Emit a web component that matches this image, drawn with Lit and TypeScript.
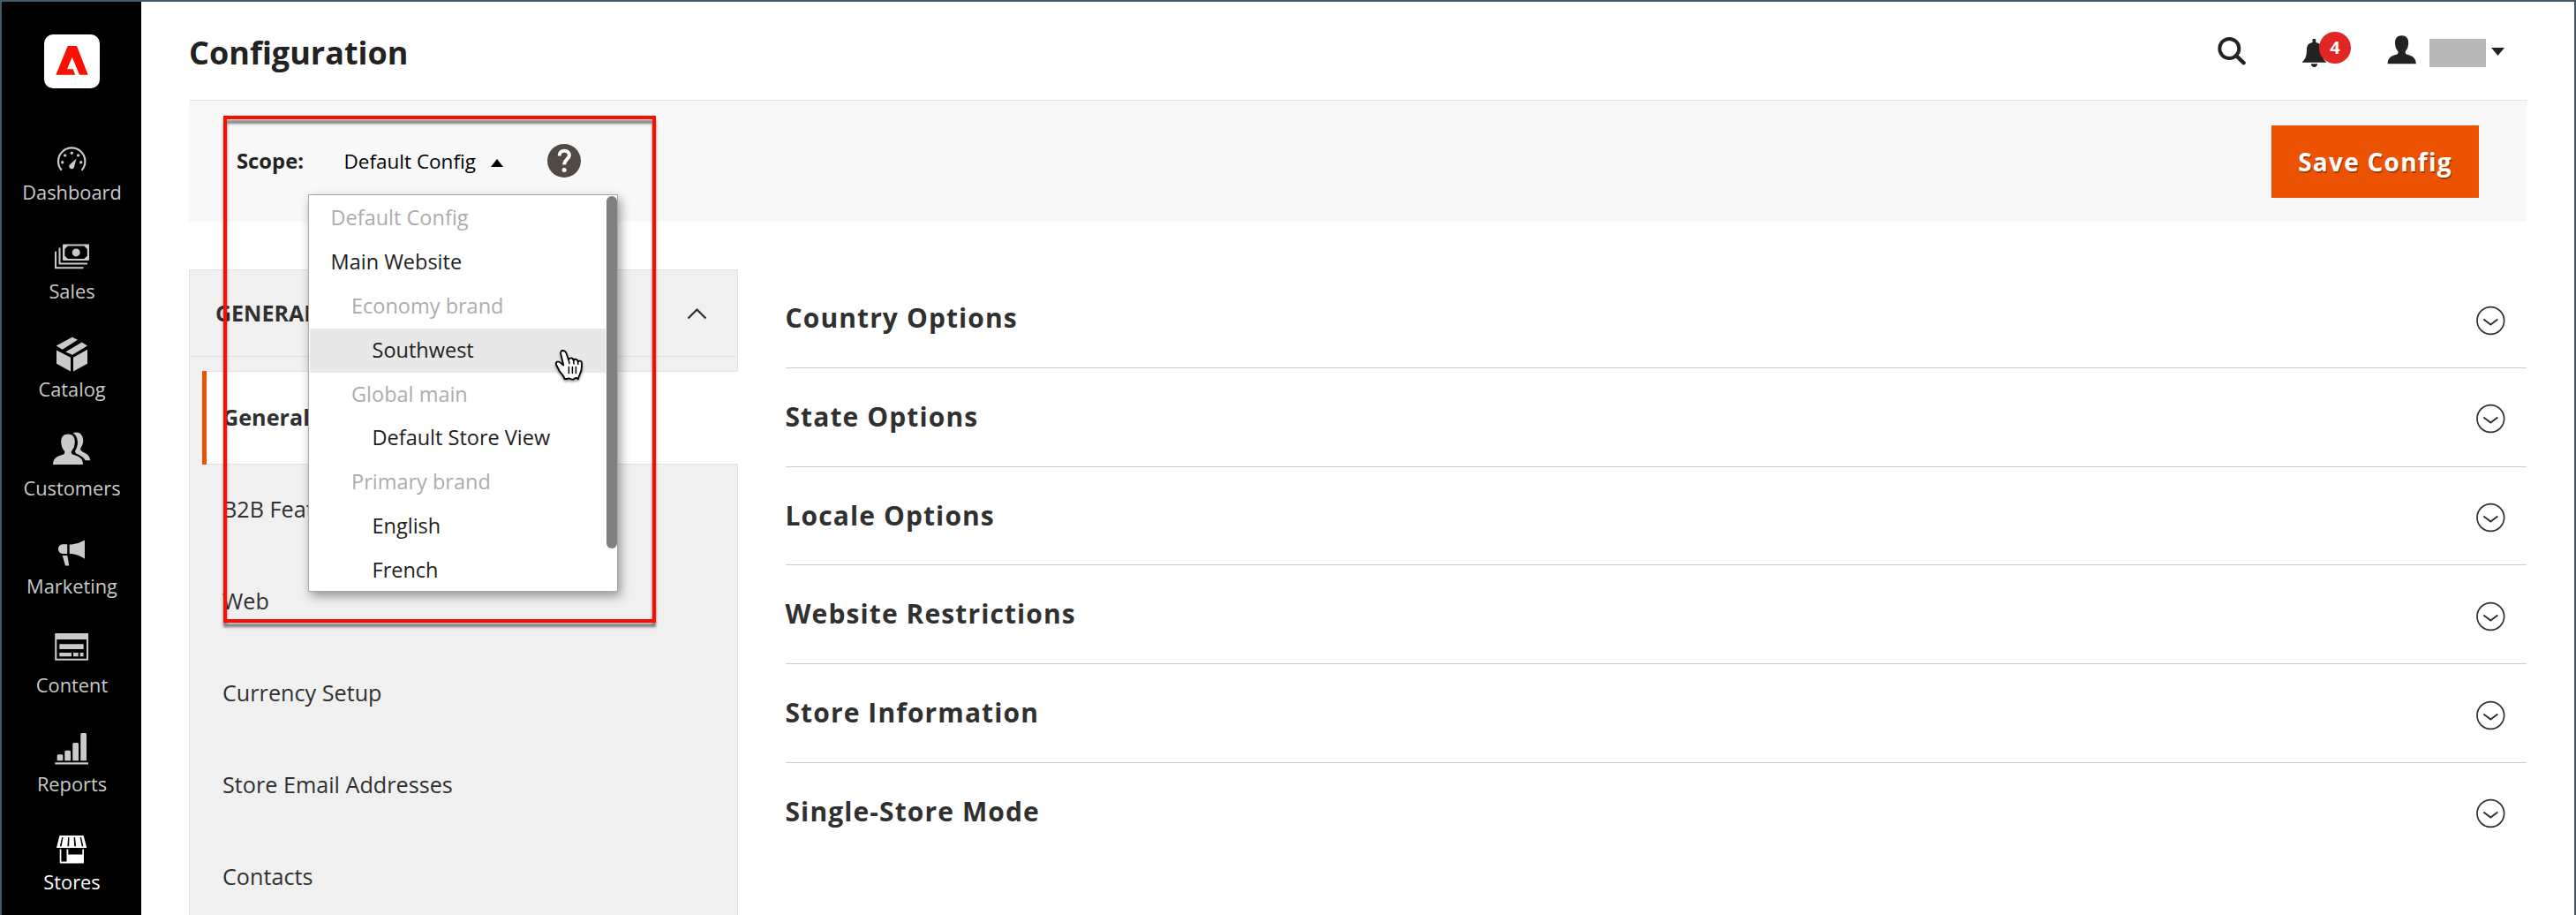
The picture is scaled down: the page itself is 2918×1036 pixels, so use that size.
import { LitElement, html, css, svg } from "lit";
import { customElement } from "lit/decorators.js";
import { classMap } from "lit/directives/class-map.js";

const navItems = [
  {
    label: "Dashboard",
    icon: svg`<path d="M12.9 37.8A15.2 15.2 0 1 1 35.5 37.8" fill="none" stroke="currentColor" stroke-width="2.2"/>
      <circle cx="13.7" cy="28.7" r="1.7"/><circle cx="16.7" cy="20.9" r="1.7"/><circle cx="24.3" cy="18.3" r="1.7"/>
      <circle cx="31.6" cy="20.9" r="1.7"/><circle cx="34.7" cy="28.7" r="1.7"/>
      <path d="M29.6 24.4L27.2 33.6A3 3 0 1 1 21.9 31.4Z"/>`,
  },
  {
    label: "Sales",
    icon: svg`<path fill-rule="evenodd" d="M15 9.4H43a1 1 0 0 1 1 1V27.1a1 1 0 0 1-1 1H15a1 1 0 0 1-1-1V10.4a1 1 0 0 1 1-1ZM20 11.6L16.4 15V22.8L20 26H38.2L41.8 22.8V15L38.2 11.6Z"/>
      <circle cx="29.2" cy="18.9" r="4.5"/>
      <path d="M10.5 13.5V31.4H42M6 17.7V36.2H37.5" fill="none" stroke="currentColor" stroke-width="2"/>`,
  },
  {
    label: "Catalog",
    icon: svg`<path d="M6.7 13.5L24.7 3.8 31 6.8 13.7 17.8ZM17.3 20.5L35.7 9.5 42 13.5 25 23.8ZM7 18.5L23 26.8V42.5L7 33.8ZM26 26.8L42 17.8V33.8L26 42.5Z"/>`,
  },
  {
    label: "Customers",
    icon: svg`<path d="M20 1.4C25 1.4 28 5 27.8 10.5C27.6 15.5 26 18.6 24 20.6C23.4 22.4 24 24 25.4 24.6C31 26.6 37 28 37 35.9H3C3 28 9 26.6 14.6 24.6C16 24 16.6 22.4 16 20.6C14 18.6 12.4 15.5 12.2 10.5C12 5 15 1.4 20 1.4Z"/>
      <path d="M25.7 .5C31-2.2 37.5 1.5 37.2 9C37 14 35 16 34.2 17.8C33.6 20 36 21.3 38.5 22.4C42.5 24.2 44.8 27 45.3 31.2H39.6C38 28 34.5 26 31.5 24.6C28.6 23.3 27.6 22 28.3 20C30.3 17 31.3 13 30.8 9.5C30.5 5 29 2.5 25.7 .5Z"/>`,
  },
  {
    label: "Marketing",
    icon: svg`<path d="M14 15.3H19.2V25.9H14C7.3 25.9 7.3 15.3 14 15.3ZM21.7 15.5C29 15.5 34 13 39 10.5V31.7C34 28.7 29 26 21.7 26ZM13.7 27.9H19.3L21.3 39.6H17Z"/>`,
  },
  {
    label: "Content",
    icon: svg`<path fill-rule="evenodd" d="M6 4H42.3a.8.8 0 0 1 .8.8V34a.8.8 0 0 1-.8.8H6a.8.8 0 0 1-.8-.8V4.8A.8.8 0 0 1 6 4ZM7.300 11V32.800H41V11Z"/>
      <path d="M10.300 16.300H37.700V22.100H10.300ZM10.300 26H24V30.200H10.300ZM26 26H31.700V30.200H26ZM33.700 26H37.500V30.200H33.700Z"/>`,
  },
  {
    label: "Reports",
    icon: svg`<path d="M5.300 38.300H43V40.500H5.300ZM8.700 29.300H13.300L14.300 30.300V36.300H7.700V30.300ZM17.300 24.700H22L23 25.700V36.300H16.300V25.700ZM26.300 16H31L32 17V36.300H25.300V17ZM35.300 5H40L41 6V36.300H34.300V6Z"/>`,
  },
  {
    label: "Stores",
    active: true,
    icon: svg`<path fill-rule="evenodd" d="M10.500 10.100H37.600L41.300 23.900H7ZM13.200 12.100L10.800 22.200H12.600L14.600 12.100ZM20.100 12.100L19.400 22.200H21.200L21.500 12.100ZM26.600 12.100L27.200 22.200H29L28.100 12.100ZM33.600 12.100L35.700 22.200H37.400L35.100 12.100Z"/>
      <path fill-rule="evenodd" d="M10.700 25.500H38V40.500a1 1 0 0 1-1 1H11.700a1 1 0 0 1-1-1ZM12.400 25.500V39.600H18.500V25.500ZM20.300 25.500V31.600H36.300V25.500Z"/>`,
  },
];

const scopes = [
  { name: "Default Config", level: 0, disabled: true },
  { name: "Main Website", level: 0 },
  { name: "Economy brand", level: 1, disabled: true },
  { name: "Southwest", level: 2, hover: true },
  { name: "Global main", level: 1, disabled: true },
  { name: "Default Store View", level: 2 },
  { name: "Primary brand", level: 1, disabled: true },
  { name: "English", level: 2 },
  { name: "French", level: 2 },
];

const tabs = ["B2B Features", "Web", "Currency Setup", "Store Email Addresses", "Contacts"];

const sections = [
  "Country Options",
  "State Options",
  "Locale Options",
  "Website Restrictions",
  "Store Information",
  "Single-Store Mode",
];

@customElement("side-nav")
export class SideNav extends LitElement {
  static styles = css`
    :host { display: flex; flex-direction: column; align-items: center; background: #000; color: #cacaca; padding-top: 37px; }
    .logo { width: 63px; height: 61px; border-radius: 10px; background: #fff; margin-bottom: 55px; flex: none; }
    .logo svg { display: block; }
    .item { width: 100%; height: 111.6px; flex: none; display: flex; flex-direction: column; align-items: center; }
    .item svg { width: 48px; height: 48px; fill: currentColor; overflow: visible; flex: none; }
    .label { font-size: 21.8px; line-height: 30px; padding-left: 1px; }
    .active { color: #fff; }
  `;
  render() {
    return html`
      <div class="logo">
        <svg width="63" height="61" viewBox="0 0 63 61"><path fill="#fa0f00" d="M27.3 13H36.2Q37 13 37.4 14L49.7 45.7H40.8Q40 45.7 39.6 44.8L31.7 25.7 26 39.3H32.7L35.3 45.7H13.3L26.3 14Q26.6 13 27.3 13Z"/></svg>
      </div>
      ${navItems.map(
        (n) => html`<div class=${classMap({ item: true, active: !!n.active })}>
          <svg viewBox="0 0 48 48">${n.icon}</svg>
          <span class="label">${n.label}</span>
        </div>`
      )}
    `;
  }
}

@customElement("scope-menu")
export class ScopeMenu extends LitElement {
  static styles = css`
    :host { display: block; box-sizing: border-box; width: 351px; height: 450px; border: 1px solid #aaa6a0; background: #fff;
      box-shadow: 3px 5px 11px rgba(0, 0, 0, 0.38); padding: 1px 0 0 1px; overflow: hidden; }
    .rows { width: 335px; }
    .row { height: 49.9px; box-sizing: border-box; padding: 0 0 2px 23.5px; font-size: 23.5px; line-height: 48px; color: #212121; white-space: nowrap; }
    .l1 { padding-left: 47px; }
    .l2 { padding-left: 70.5px; }
    .disabled { color: #acacac; }
    .hover { background: #e8e8e8; }
    .thumb { position: absolute; top: 1px; right: 0; width: 12.5px; height: 399px; border-radius: 6px; background: #808080; }
    .cursor { position: absolute; left: 277px; top: 174px; filter: drop-shadow(0 2px 1.5px rgba(0, 0, 0, 0.4)); }
  `;
  render() {
    return html`
      <div class="rows">
        ${scopes.map(
          (s) => html`<div class=${classMap({ row: true, l1: s.level === 1, l2: s.level === 2, disabled: !!s.disabled, hover: !!s.hover })}>${s.name}</div>`
        )}
      </div>
      <div class="thumb"></div>
      <svg class="cursor" width="36" height="38" viewBox="0 0 36 38">
        <path fill="#fff" stroke="#000" stroke-width="1.8" stroke-linejoin="round"
          d="M10.5 2C8.7 2 7.7 3.5 8.2 5.5L11.3 18.5C9.5 17.5 7.5 14.3 5.2 14.3C3 14.3 2.2 16.5 3.3 18.5L7 25.5C8.5 28.3 11.5 29.5 12.5 34H15.5C18 31.8 20 35.5 22.5 34.5C24.5 33 26.5 31.8 27.8 34.3C29 29 32 27 32 20V16C32 13.5 28.5 12.6 27.7 15C27.7 11.3 23.5 10.8 22.7 13.5C22.5 9.8 18.5 9.6 17 12.2L14.5 5C13.5 2.5 12 2 10.5 2Z"/>
        <path fill="none" stroke="#000" stroke-width="1.5" stroke-linecap="round" d="M17 12.2L18 16.5M22.7 13.5L23 17M27.7 15V17.5M17.4 20.5V27.5M21.4 20.5V27.5M25.4 20.5V27.5"/>
      </svg>
    `;
  }
}

@customElement("app-root")
export class AppRoot extends LitElement {
  static styles = css`
    :host { display: block; position: relative; box-sizing: border-box; width: 2918px; height: 1036px; overflow: hidden;
      border: 2px solid #455a64; border-bottom: 0; background: #fff; font-family: "Open Sans", "Liberation Sans", sans-serif; color: #303030; }
    .shell { display: grid; grid-template-columns: 158px 1fr; height: 1034px; }
    .main { padding: 0 54px; display: flex; flex-direction: column; min-width: 0; }

    .header { height: 111px; flex: none; display: flex; justify-content: space-between; }
    h1 { margin: 9.5px 0 0; font-size: 36px; line-height: 96px; height: 96px; font-weight: 700; color: #222; }
    .tools { display: flex; color: #222; padding: 36px 25px 0 0; }
    .tools svg { display: block; flex: none; fill: currentColor; }
    .bell { position: relative; margin-left: 61px; width: 59px; }
    .badge { position: absolute; left: 21px; top: -2px; width: 36px; height: 36px; border-radius: 50%; background: #e22626;
      color: #fff; font-size: 20px; font-weight: 700; line-height: 35px; text-align: center; }
    .user { margin-left: 39px; }
    .name { width: 64px; height: 32px; background: #b9b9b9; margin: 6px 0 0 14px; }
    .caret { margin: 16px 0 0 6px; }

    .toolbar { box-sizing: border-box; height: 138px; flex: none; border-top: 1px solid #e3e3e3; background: #f8f8f8; display: flex;
      justify-content: space-between; padding: 28px 54px 0; }
    .scope { display: flex; height: 80px; font-size: 23.8px; }
    .scope b { line-height: 81px; color: #222; width: 121.5px; }
    .value { position: relative; font-size: 22.5px; line-height: 81px; color: #000; display: flex; white-space: nowrap; }
    .text { width: 166px; }
    .tri { margin-top: 38px; }
    .help { margin: 20.500px 0 0 50px; }
    scope-menu { position: absolute; z-index: 2; left: -40.5px; top: 78px; }
    .save { box-sizing: border-box; width: 235px; height: 82px; border: 0; padding: 0; background: #eb5202; color: #fff; text-align: center;
      font: 700 28px/82px "Open Sans", sans-serif; letter-spacing: 1.25px; text-shadow: 1px 2px 0 rgba(0, 0, 0, 0.3); }

    .body { display: grid; grid-template-columns: 622px 1972px; column-gap: 54px; padding-top: 54px; }
    .panel { box-sizing: border-box; height: 800px; background: #f0f0f0; border: 1px solid #e3e3e3; }
    .group { height: 98px; margin: 0 1px; padding: 0 34px 0 28px; box-sizing: border-box; border-bottom: 1px solid #e0e0e0; display: flex;
      justify-content: space-between; font-size: 25px; font-weight: 700; line-height: 97px; }
    .group svg { margin-top: 42.5px; }
    .current { margin: 16px -1px 0 14px; box-sizing: border-box; height: 106px; border: solid #e3e3e3; border-width: 1px 0; background: #fff;
      font-size: 25.2px; font-weight: 700; line-height: 103px; display: flex; }
    .mark { width: 5px; margin: -1px 18px -1px 0; background: #eb5202; }
    .tabs { margin-top: -2px; }
    .tab { height: 104px; padding-left: 37px; font-size: 25.2px; line-height: 104px; white-space: nowrap; }

    .section { box-sizing: border-box; height: 111.8px; border-bottom: 1px solid #ccc; display: flex; justify-content: space-between; padding-right: 24px; }
    .section:last-child { border: 0; }
    .section h2 { margin: 0 0 0 -0.5px; font-size: 30px; line-height: 110px; letter-spacing: 1.1px; font-weight: 700; }
    .section svg { margin-top: 40.5px; }

    .callout { position: absolute; z-index: 3; left: 251px; top: 129px; width: 482px; height: 566px; border: 4px solid #fc0d00;
      filter: drop-shadow(0 5px 1.5px rgba(0, 0, 0, 0.5)); pointer-events: none; }
  `;
  render() {
    return html`
      <div class="shell">
        <side-nav></side-nav>
        <div class="main">
          <div class="header">
            <h1>Configuration</h1>
            <div class="tools">
              <svg width="34" height="38" viewBox="0 0 34 38"><circle cx="14.3" cy="17" r="11" fill="none" stroke="currentColor" stroke-width="3.9"/><path d="M22 25L30.500 33.200" stroke="currentColor" stroke-width="4.500" stroke-linecap="round"/></svg>
              <div class="bell">
                <svg width="30" height="40" viewBox="0 0 30 40"><path d="M14.6 6H16.4Q17.3 6 17.3 7V10C22 11 23.7 13 24 18C24.2 25 25 28.5 29 32V32.7H2V32C6 28.5 6.8 25 7 18C7.3 13 9 11 13.5 10V7Q13.500 6 14.600 6ZM11.800 34.200H19.200Q18.600 38 15.500 38Q12.400 38 11.800 34.200Z"/></svg>
                <span class="badge">4</span>
              </div>
              <svg class="user" width="34" height="38" viewBox="0 0 34 38"><path d="M16.6 2.3C21.5 2.3 24.3 5.5 24.2 10.5C24 15.5 22.5 18 20.8 20C20.3 22.3 21 23.2 22.6 23.7C28 25.2 32.7 27 32.8 34.2H.6C.7 27 5.2 25.2 10.6 23.7C12.2 23.2 12.9 22.3 12.4 20C10.7 18 9.2 15.5 9 10.5C8.9 5.5 11.7 2.3 16.6 2.3Z"/></svg>
              <div class="name"></div>
              <svg class="caret" width="15" height="9" viewBox="0 0 15 9"><path d="M0 0H15L7.5 9Z"/></svg>
            </div>
          </div>

          <div class="toolbar">
            <div class="scope">
              <b>Scope:</b>
              <div class="value">
                <span class="text">Default Config</span>
                <svg class="tri" width="14" height="9" viewBox="0 0 14 9"><path d="M0 9H14L7 0Z"/></svg>
                <svg class="help" width="38" height="38" viewBox="0 0 38 38"><circle cx="19" cy="19" r="19" fill="#514943"/><path d="M13.7 13.5C13.5 9.5 16 7.8 19.2 7.8C22.7 7.8 24.9 9.8 24.9 12.7C24.9 17 19.2 17.5 19.2 23.5" fill="none" stroke="#fff" stroke-width="4"/><circle cx="19.1" cy="29.4" r="2.5" fill="#fff"/></svg>
                <scope-menu></scope-menu>
              </div>
            </div>
            <button class="save">Save Config</button>
          </div>

          <div class="body">
            <div class="panel">
              <div class="group">
                <span>GENERAL</span>
                <svg width="21" height="12" viewBox="0 0 21 12"><path d="M1.200 10.800L10.500 1.500 19.800 10.800" fill="none" stroke="#303030" stroke-width="2.3" stroke-linecap="round" stroke-linejoin="round"/></svg>
              </div>
              <div class="current"><div class="mark"></div>General</div>
              <div class="tabs">${tabs.map((t) => html`<div class="tab">${t}</div>`)}</div>
            </div>
            <div>
              ${sections.map(
                (s) => html`<div class="section">
                  <h2>${s}</h2>
                  <svg width="34" height="34" viewBox="0 0 34 34" fill="none" stroke="#303030"><circle cx="17.3" cy="17" r="15.3" stroke-width="1.7"/><path d="M9.3 15.5L17.3 21.5 25.3 15.5" stroke-width="2"/></svg>
                </div>`
              )}
            </div>
          </div>
        </div>
      </div>
      <div class="callout"></div>
    `;
  }
}
